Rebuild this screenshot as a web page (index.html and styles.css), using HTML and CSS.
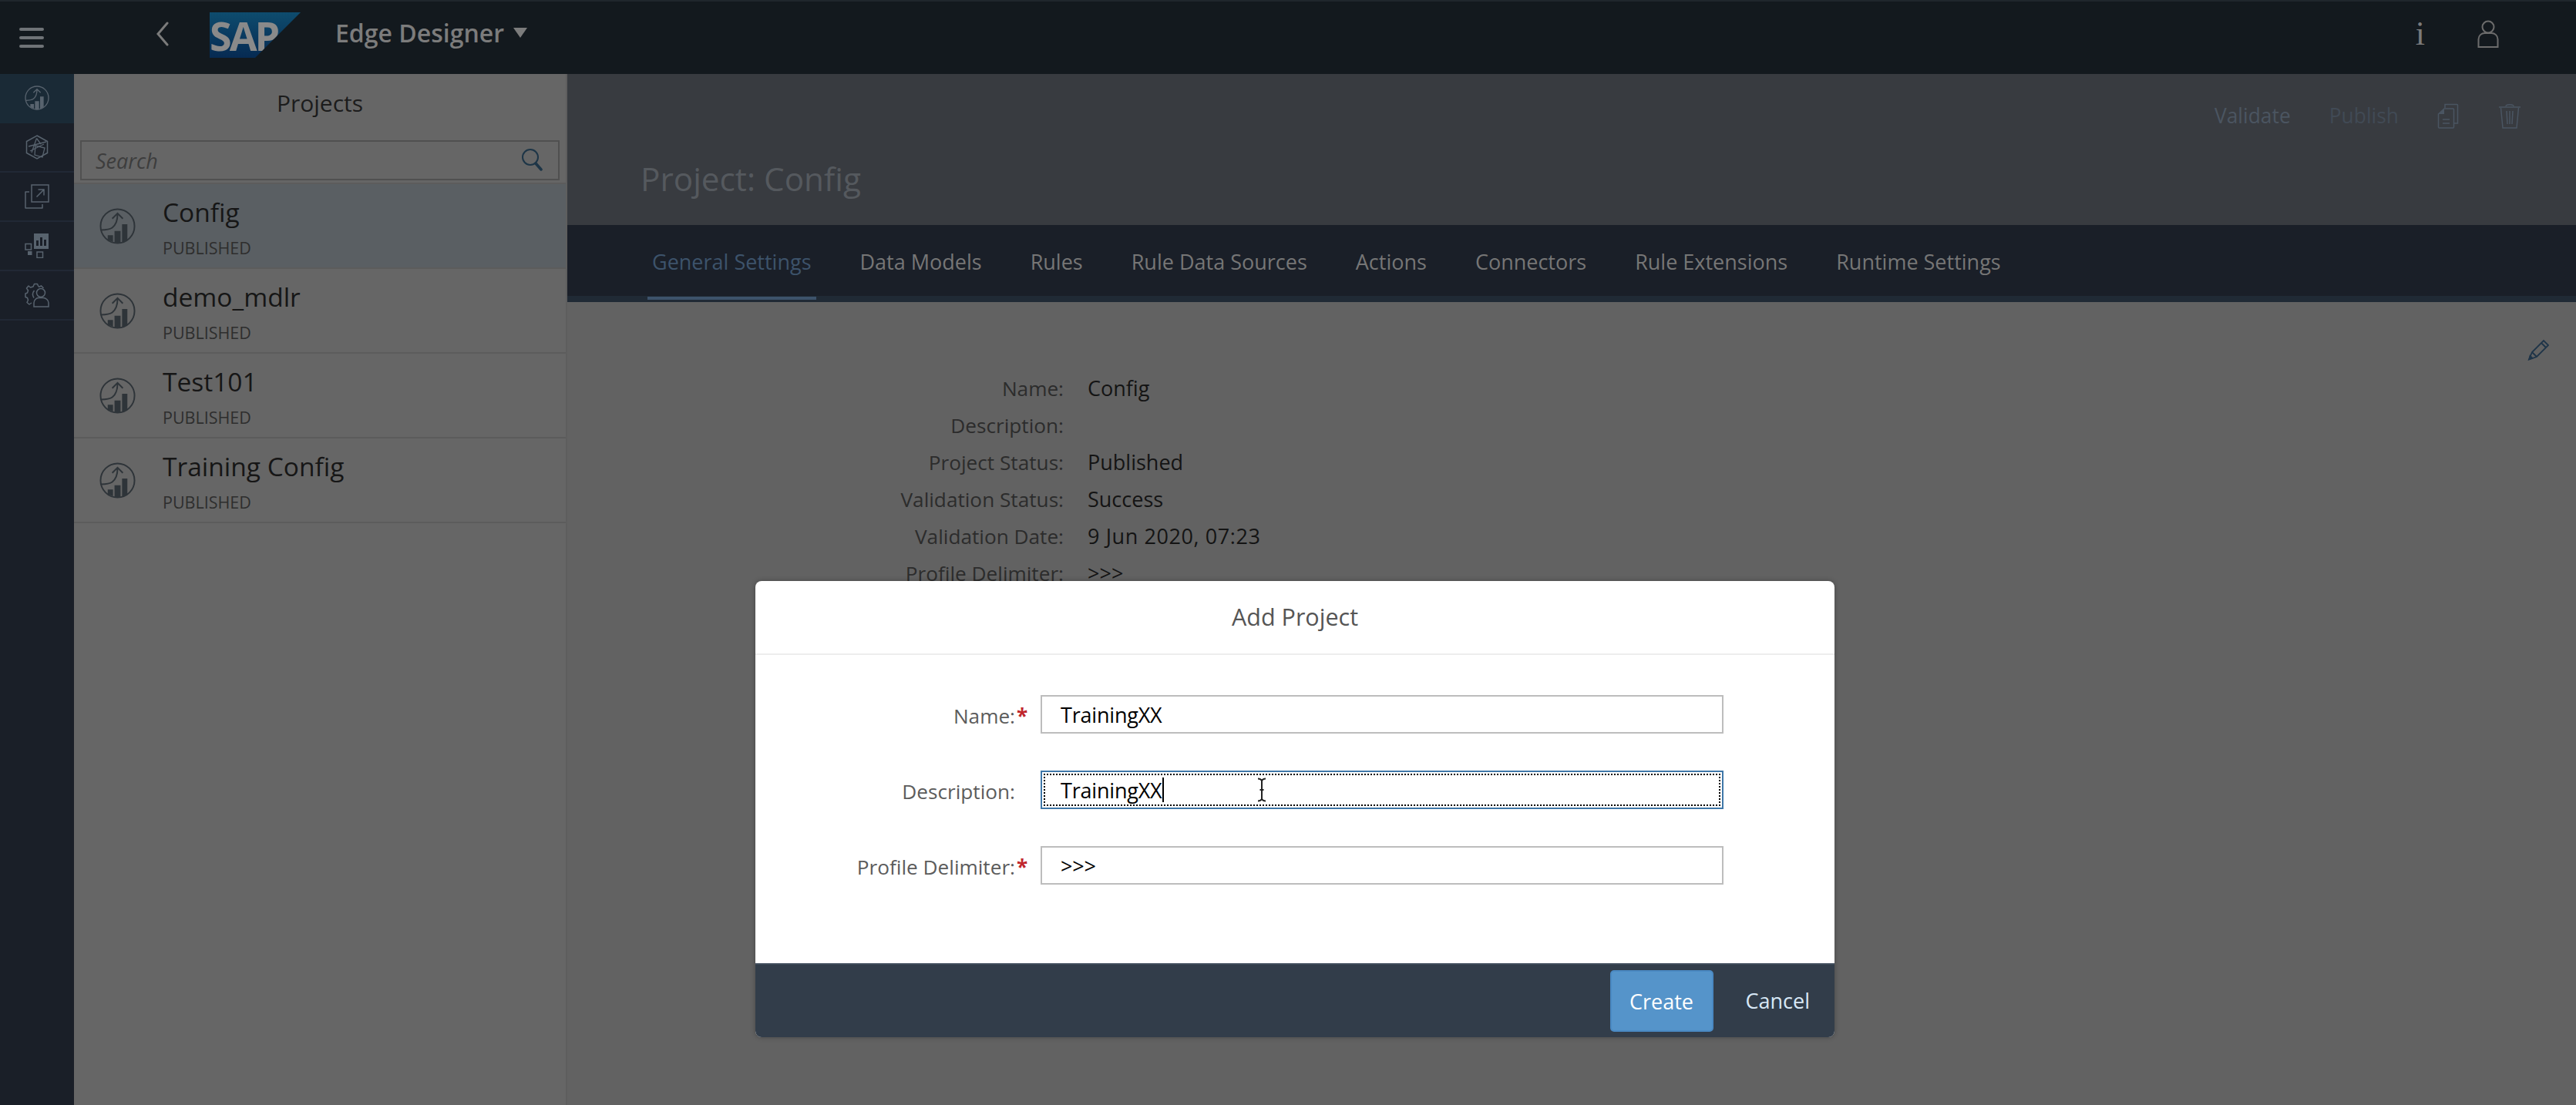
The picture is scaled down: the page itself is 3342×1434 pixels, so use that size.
FILE: index.html
```html
<!DOCTYPE html>
<html lang="en">
<head>
<meta charset="utf-8">
<title>Edge Designer</title>
<link rel="stylesheet" href="styles.css">
</head>
<body>
<svg class="defs" width="0" height="0" aria-hidden="true">
  <symbol id="project" viewBox="0 0 48 48">
    <circle cx="24" cy="24" r="22.500" fill="none" stroke="currentColor" stroke-width="2"/>
    <path d="M2 29c5 0 11 0 15-3s7-8 7-18M17 14l7-7 7 7" fill="none" stroke="currentColor" stroke-width="2"/>
    <path d="M11 36h7v9l-7-3zM20 30.500h8V47h-8zM30 21.500h7V42l-7 4z" fill="currentColor"/>
  </symbol>
</svg>

<header class="topbar">
  <div class="topbar-left">
    <button class="menu" aria-label="Menu"><span></span><span></span><span></span></button>
    <svg class="back" viewBox="0 0 20 32"><path d="M16 2 4 16l12 14" fill="none" stroke="currentColor" stroke-width="3" stroke-linecap="round"/></svg>
    <div class="logo"><span>SAP</span></div>
    <div class="appname">Edge Designer</div>
    <span class="caret-down"></span>
  </div>
  <div class="topbar-right">
    <span class="info">i</span>
    <svg class="user" viewBox="0 0 28 36"><circle cx="14" cy="9" r="7.500" fill="none" stroke="currentColor" stroke-width="2"/><path d="M1.500 35V25c0-5 4-8 8-8h9c4 0 8 3 8 8v10z" fill="none" stroke="currentColor" stroke-width="2"/></svg>
  </div>
</header>

<div class="body">
  <nav class="rail">
    <div class="rail-item active"><svg class="rail-icon"><use href="#project"/></svg></div>
    <div class="rail-item">
      <svg class="rail-icon" viewBox="0 0 32 32"><path d="M16 1 29.500 8.500v15L16 31 2.500 23.500v-15z" fill="none" stroke="currentColor" stroke-width="1.500"/><path d="M15.500 4.500 9 23M15.500 4.500 21 12M5 15l23-6M7 21 25 12M14 14l-1 12 10 3 3-12z" fill="none" stroke="currentColor" stroke-width="1.300"/></svg>
    </div>
    <div class="rail-item">
      <svg class="rail-icon" viewBox="0 0 32 32"><path d="M9 1h22v22H9zM15.500 16.500 25 7M17.500 7H25v7.500" fill="none" stroke="currentColor" stroke-width="1.500"/><path d="M6 10H1v21h22v-5" fill="none" stroke="currentColor" stroke-width="1.500" stroke-linejoin="round"/></svg>
    </div>
    <div class="rail-item">
      <svg class="rail-icon" viewBox="0 0 32 32"><path fill="currentColor" fill-rule="evenodd" d="M12 0h19v20H12zM15 9v7h3V9zM20 5v11h3V5zM25 8v8h3V8z"/><path d="M1 13.500h7.500v7.500H1zM16 24h7.500v7.500H16z" fill="none" stroke="currentColor" stroke-width="1.500"/><rect x="4" y="23" width="5.500" height="5" fill="currentColor"/></svg>
    </div>
    <div class="rail-item">
      <svg class="rail-icon" viewBox="0 0 32 32"><path d="M18 5l-1.500-3.500h-4L11 5 7.500 6 5 4 2.500 7 4.500 10 3.500 13 1 14v4.500l2.500 1 1 3-1.500 3 3 2.500 3-2" fill="none" stroke="currentColor" stroke-width="1.500" stroke-linejoin="round"/><path d="M18 5.500l3.500-1.500 3 3M12.500 10c-2.500 3-2.500 6.500-.5 9.500" fill="none" stroke="currentColor" stroke-width="1.500"/><circle cx="21" cy="13" r="5.500" fill="none" stroke="currentColor" stroke-width="1.500"/><path d="M12 31v-5c0-3.500 3-6.500 6-6.500h6c3.500 0 7 3 7 6.500v5z" fill="none" stroke="currentColor" stroke-width="1.500"/></svg>
    </div>
  </nav>

  <aside class="projects">
    <h2 class="projects-title">Projects</h2>
    <div class="search">
      <span class="search-text">Search</span>
      <svg class="search-icon" viewBox="0 0 28 32"><circle cx="12" cy="12" r="10" fill="none" stroke="currentColor" stroke-width="2"/><path d="m19 20 7 8" fill="none" stroke="currentColor" stroke-width="3.500" stroke-linecap="round"/></svg>
    </div>
    <ul class="project-list">
      <li class="project selected"><svg class="project-icon"><use href="#project"/></svg><div><div class="project-name">Config</div><div class="project-status">PUBLISHED</div></div></li>
      <li class="project"><svg class="project-icon"><use href="#project"/></svg><div><div class="project-name">demo_mdlr</div><div class="project-status">PUBLISHED</div></div></li>
      <li class="project"><svg class="project-icon"><use href="#project"/></svg><div><div class="project-name">Test101</div><div class="project-status">PUBLISHED</div></div></li>
      <li class="project"><svg class="project-icon"><use href="#project"/></svg><div><div class="project-name">Training Config</div><div class="project-status">PUBLISHED</div></div></li>
    </ul>
  </aside>

  <main class="main">
    <section class="main-head">
      <div class="actions">
        <span class="action">Validate</span>
        <span class="action muted">Publish</span>
        <svg class="icon-copy" viewBox="0 0 28 33"><path d="M10 6V1.500h15.500a1 1 0 0 1 1 1V26H22" fill="none" stroke="currentColor" stroke-width="1.500"/><path d="M9 7h11.500a1 1 0 0 1 1 1v23a1 1 0 0 1-1 1H2.500a1 1 0 0 1-1-1V14zM7 21h9M7 26h9" fill="none" stroke="currentColor" stroke-width="1.500"/><path d="M2 14h7V7z" fill="currentColor"/></svg>
        <svg class="icon-trash" viewBox="0 0 30 33"><path d="M1 5h28M10 4c0-3 10-3 10 0M3.500 6 6 32h18l2.500-26M11 10l1 17M15 10v17M19 10l-1 17" fill="none" stroke="currentColor" stroke-width="1.500"/></svg>
      </div>
      <h1 class="main-title">Project: Config</h1>
    </section>
    <nav class="tabs">
      <a class="tab active">General Settings</a>
      <a class="tab">Data Models</a>
      <a class="tab">Rules</a>
      <a class="tab">Rule Data Sources</a>
      <a class="tab">Actions</a>
      <a class="tab">Connectors</a>
      <a class="tab">Rule Extensions</a>
      <a class="tab">Runtime Settings</a>
    </nav>
    <section class="details">
      <svg class="edit" viewBox="0 0 28 28"><path d="M2 26.500 6 17 21 2l6 6-15 15zM6 17l6 6M18 5l6 6" fill="none" stroke="currentColor" stroke-width="1.800"/><path d="M1 27.500 3 20l5 5z" fill="currentColor"/></svg>
      <dl class="fields">
        <dt>Name:</dt><dd>Config</dd>
        <dt>Description:</dt><dd></dd>
        <dt>Project Status:</dt><dd>Published</dd>
        <dt>Validation Status:</dt><dd>Success</dd>
        <dt>Validation Date:</dt><dd class="date">9 Jun 2020, 07:23</dd>
        <dt>Profile Delimiter:</dt><dd>&gt;&gt;&gt;</dd>
      </dl>
    </section>
  </main>
</div>

<div class="dialog">
  <div class="dialog-head">Add Project</div>
  <form class="dialog-form">
    <div class="form-label">Name:<span class="req">*</span></div>
    <div class="input">TrainingXX</div>
    <div class="form-label">Description:<span class="req"></span></div>
    <div class="input focused">TrainingXX<span class="text-caret"></span></div>
    <div class="form-label">Profile Delimiter:<span class="req">*</span></div>
    <div class="input">&gt;&gt;&gt;</div>
  </form>
  <div class="dialog-foot">
    <button class="btn-create" type="button">Create</button>
    <button class="btn-cancel" type="button">Cancel</button>
  </div>
</div>
<svg class="ibeam" viewBox="0 0 12 32"><path d="M1 1.500c3 0 4 1 5 2.500 1-1.500 2-2.500 5-2.500M1 30.500c3 0 4-1 5-2.500 1 1.500 2 2.500 5 2.500M6 4v24M3.500 16h5" fill="none" stroke="#222" stroke-width="2"/></svg>
</body>
</html>
```

FILE: styles.css
```css
* { box-sizing: border-box; }
html, body { margin: 0; height: 100%; }
body {
  width: 3342px;
  height: 1434px;
  overflow: hidden;
  position: relative;
  display: flex;
  flex-direction: column;
  background: #626262;
  font-family: "Open Sans", "Noto Sans", sans-serif;
  font-size: 27px;
  color: #1f1f1f;
}
.defs { position: absolute; }

.topbar {
  height: 96px;
  flex: none;
  display: flex;
  justify-content: space-between;
  background: #13191e;
  border-top: 2px solid #1f262c;
  color: #7b7b7b;
}
.topbar-left { display: flex; align-items: flex-start; }
.menu {
  width: 32px;
  height: 26px;
  margin: 34px 0 0 25px;
  padding: 0;
  border: 0;
  background: none;
  display: flex;
  flex-direction: column;
  justify-content: space-between;
}
.menu span { height: 4px; border-radius: 2px; background: #6f7377; }
.back { width: 20px; height: 32px; margin: 26px 0 0 144px; color: #7b7b7b; }
.logo {
  width: 118px;
  height: 59px;
  margin: 14px 0 0 51px;
  clip-path: polygon(0 0, 100% 0, 50% 100%, 0 100%);
  background: linear-gradient(#0e4c6e, #062a52);
}
.logo span {
  display: block;
  font-size: 52px;
  line-height: 60px;
  font-weight: 700;
  letter-spacing: -3px;
  color: #8a8a8a;
}
.appname { margin: 19px 0 0 45px; font-size: 32px; line-height: 44px; font-weight: 600; color: #7c7c7c; }
.caret-down {
  margin: 34px 0 0 12px;
  width: 0;
  height: 0;
  border-left: 9px solid transparent;
  border-right: 9px solid transparent;
  border-top: 13px solid #7c7c7c;
}
.topbar-right { display: flex; align-items: flex-start; padding-right: 100px; }
.info { font-family: "Liberation Serif", serif; font-size: 44px; line-height: 60px; margin: 12px 68px 0 0; color: #7b7b7b; }
.user { width: 28px; height: 36px; margin-top: 24px; color: #6c6c6c; }

.body { flex: 1; display: flex; min-height: 0; }
.rail { width: 96px; flex: none; background: #1a1f28; }
.rail-item {
  height: 64px;
  display: flex;
  align-items: center;
  justify-content: center;
  border-bottom: 2px solid #212835;
  color: #58636e;
}
.rail-item.active { background: #1a2a36; border-bottom-color: #1a2a36; }
.rail-icon { width: 32px; height: 32px; }

.projects { width: 640px; flex: none; background: #666; border-right: 2px solid #5e5e5e; }
.projects-title { margin: 0; height: 86px; text-align: center; font-size: 30px; line-height: 76px; font-weight: 400; color: #1c1c1c; }
.search {
  margin: 0 8px;
  height: 52px;
  border: 2px solid #505050;
  display: flex;
  align-items: center;
  justify-content: space-between;
  padding: 0 20px 0 18px;
}
.search-text { font-style: italic; font-size: 27px; color: #3d3d3d; }
.search-icon { width: 28px; height: 32px; color: #1d3547; }
.project-list { list-style: none; margin: 3px 0 0; padding: 0; border-top: 2px solid #5c5c5c; }
.project { height: 110px; display: flex; align-items: center; padding-left: 33px; border-bottom: 2px solid #5c5c5c; }
.project.selected { background: #5a5f63; }
.project-icon { width: 47px; height: 47px; margin-right: 35px; color: #2e3439; }
.project-name { font-size: 33.5px; line-height: 48px; color: #161616; }
.project-status { font-size: 21.5px; line-height: 28px; margin-top: 9px; color: #2e2e2e; }

.main { flex: 1; display: flex; flex-direction: column; min-width: 0; background: #626262; }
.main-head { height: 196px; flex: none; background: #383b40; padding-top: 36px; }
.actions { display: flex; justify-content: flex-end; align-items: center; padding-right: 71px; height: 36px; gap: 50px; color: #4a5562; }
.action { font-size: 26.4px; color: #4b5561; }
.action.muted { color: #414a55; }
.icon-copy { width: 28px; height: 33px; color: #4a5562; }
.icon-trash { width: 30px; height: 33px; margin-left: 1px; color: #4a5562; }
.main-title { margin: 34px 0 0 95px; font-size: 42.3px; line-height: 60px; font-weight: 400; color: #55595e; }

.tabs { height: 100px; flex: none; display: flex; gap: 51px; padding-left: 104px; background: #1a1f28; border-bottom: 8px solid #202a35; }
.tab { position: relative; height: 92px; padding: 0 6px; line-height: 95px; font-size: 27px; color: #767676; white-space: nowrap; }
.tab.active { color: #3d536b; }
.tab.active::after { content: ""; position: absolute; left: 0; right: 0; bottom: -5px; height: 4px; background: #3d536b; }

.details { position: relative; flex: 1; padding-top: 88px; }
.edit { position: absolute; right: 35px; top: 48px; width: 28px; height: 28px; color: #1e3448; }
.fields {
  margin: 0;
  display: grid;
  grid-template-columns: 644px 1fr;
  grid-auto-rows: 48px;
  column-gap: 31px;
  line-height: 48px;
  font-size: 27px;
}
.fields dt { text-align: right; font-size: 26.2px; color: #2c2c2c; }
.fields dd { margin: 0; color: #141414; }
.fields dd.date { letter-spacing: .6px; }

.dialog {
  position: absolute;
  left: 980px;
  top: 754px;
  width: 1400px;
  height: 592px;
  display: flex;
  flex-direction: column;
  background: #fff;
  border-radius: 8px;
  overflow: hidden;
  box-shadow: 0 0 6px rgba(0,0,0,.3);
}
.dialog-head { height: 96px; flex: none; border-bottom: 2px solid #ededed; text-align: center; line-height: 92px; font-size: 30.5px; color: #555; }
.dialog-form {
  flex: 1;
  display: grid;
  grid-template-columns: 353px 886px;
  grid-auto-rows: 50px;
  row-gap: 48px;
  column-gap: 17px;
  padding-top: 52px;
  align-items: center;
}
.form-label { display: flex; justify-content: flex-end; align-items: center; padding-top: 3px; font-size: 26.2px; color: #5c5c5c; }
.req { width: 16px; color: #c0262c; font-weight: 700; padding-left: 2px; }
.input {
  height: 50px;
  border: 2px solid #bdbdbd;
  padding-left: 24px;
  display: flex;
  align-items: center;
  font-size: 27px;
  letter-spacing: -.2px;
  color: #000;
}
.input.focused { border-color: #3f77a8; outline: 2px dotted #000; outline-offset: -6px; }
.text-caret { width: 2px; height: 32px; background: #000; }
.dialog-foot { height: 96px; flex: none; display: flex; align-items: center; justify-content: flex-end; padding-right: 32px; background: #323d4a; border-top: 2px solid #3f4c5b; }
.btn-create { width: 134px; height: 80px; border: 2px solid #4a89c3; border-radius: 5px; background: #5594ca; color: #fff; font: 27px "Open Sans", sans-serif; }
.btn-cancel { margin: 0 0 2px 42px; padding: 0; border: 0; background: none; color: #d8e8f6; font: 27px "Open Sans", sans-serif; }
.ibeam { position: absolute; left: 1631px; top: 1009px; width: 12px; height: 32px; }
```
